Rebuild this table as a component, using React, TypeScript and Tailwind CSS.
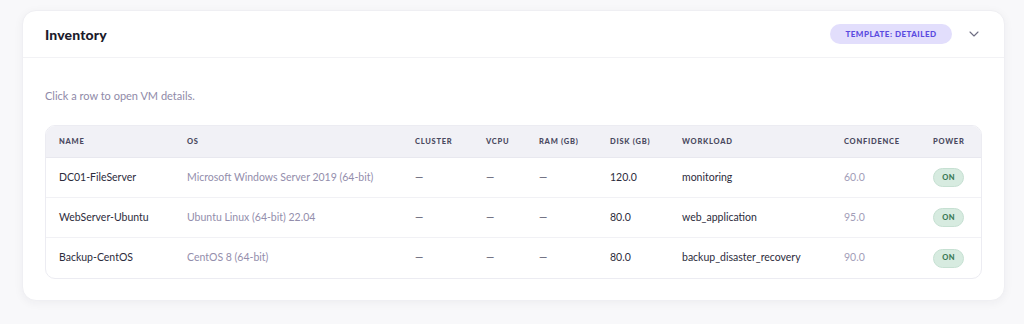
import { ChevronDown } from "lucide-react";

type Vm = {
    name: string;
    os: string;
    disk: string;
    workload: string;
    confidence: string;
};

const vms: Vm[] = [
    { name: "DC01-FileServer", os: "Microsoft Windows Server 2019 (64-bit)", disk: "120.0", workload: "monitoring", confidence: "60.0" },
    { name: "WebServer-Ubuntu", os: "Ubuntu Linux (64-bit) 22.04", disk: "80.0", workload: "web_application", confidence: "95.0" },
    { name: "Backup-CentOS", os: "CentOS 8 (64-bit)", disk: "80.0", workload: "backup_disaster_recovery", confidence: "90.0" },
];

const columns = ["Name", "OS", "Cluster", "vCPU", "RAM (GB)", "Disk (GB)", "Workload", "Confidence", "Power"];

const gridCols = "grid grid-cols-[128px_228px_71px_53px_71px_72px_162px_89px_1fr] items-center";

const App = () => {
    return (
        <div
            className="min-h-[324px] bg-[#f8f8fa] pl-[22px] pr-[19px] pt-[10px]"
            style={{ fontFamily: "Lato, 'Open Sans', sans-serif" }}
        >
            <section className="bg-white rounded-[14px] border border-[#efeff3] shadow-[0_2px_10px_rgba(30,30,60,0.05)]">
                <div className="h-[47px] flex items-center justify-between pl-[22px] pr-[22px] border-b border-[#f2f2f5]">
                    <h2 className="text-[14px] font-black tracking-[0.01em] text-[#1c1b2b]">Inventory</h2>
                    <div className="flex items-center gap-[14px]">
                        <span className="h-[20px] w-[122px] flex items-center justify-center rounded-full bg-[#e2defc] text-[#5a4be0] text-[8px] font-black tracking-[0.06em]">
                            TEMPLATE: DETAILED
                        </span>
                        <ChevronDown size={16} strokeWidth={1.6} className="text-[#6e6d82]" />
                    </div>
                </div>

                <div className="px-[22px] pt-[31px] pb-[21px]">
                    <p className="text-[11px] text-[#8f8aa8] leading-[14px] mb-[22px]">
                        Click a row to open VM details.
                    </p>

                    <div className="border border-[#ececf2] rounded-[10px] overflow-hidden">
                        <div className={`${gridCols} h-[32px] bg-[#f1f1f6] border-b border-[#e8e8ef]`}>
                            {columns.map((col) => (
                                <div
                                    key={col}
                                    className="pl-[13px] text-[7.5px] font-black uppercase tracking-[0.1em] text-[#4a4960]"
                                >
                                    {col}
                                </div>
                            ))}
                        </div>

                        {vms.map((vm, i) => (
                            <div
                                key={vm.name}
                                className={`${gridCols} h-[40px] text-[10.5px] ${i < vms.length - 1 ? "border-b border-[#f1f1f5]" : ""}`}
                            >
                                <div className="pl-[13px] text-[#2d2c3c]">{vm.name}</div>
                                <div className="pl-[13px] text-[#938eac]">{vm.os}</div>
                                <div className="pl-[13px] text-[#55546a]">—</div>
                                <div className="pl-[13px] text-[#55546a]">—</div>
                                <div className="pl-[13px] text-[#55546a]">—</div>
                                <div className="pl-[13px] text-[#2d2c3c]">{vm.disk}</div>
                                <div className="pl-[13px] text-[#2d2c3c]">{vm.workload}</div>
                                <div className="pl-[13px] text-[#a29db8]">{vm.confidence}</div>
                                <div className="pl-[13px]">
                                    <span className="h-[19px] w-[31px] inline-flex items-center justify-center rounded-full bg-[#d7ebe0] border border-[#c6e0d2] text-[#3b7a57] text-[7.5px] font-black tracking-[0.05em]">
                                        ON
                                    </span>
                                </div>
                            </div>
                        ))}
                    </div>
                </div>
            </section>
        </div>
    );
};

export default App;
